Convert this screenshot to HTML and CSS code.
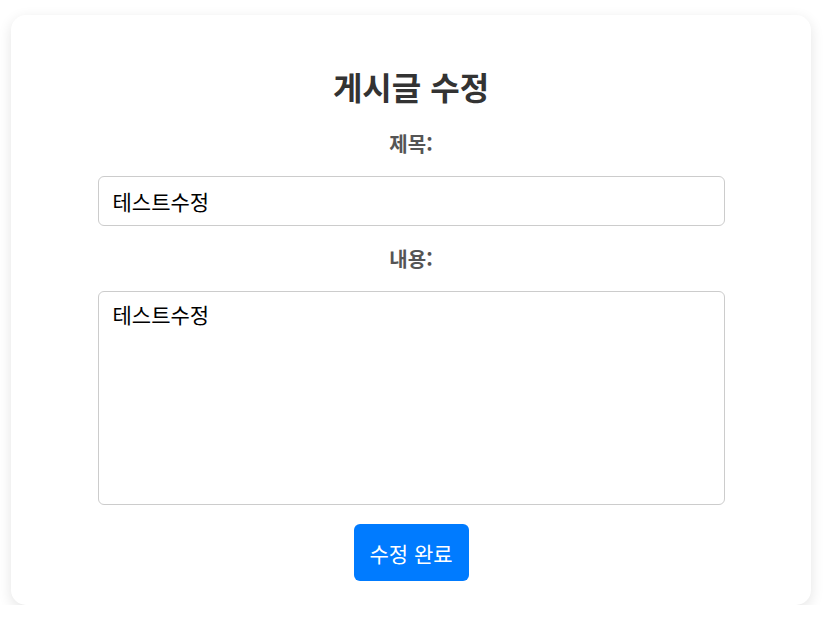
FILE: index.html
```html
<!DOCTYPE html>
<html lang="ko">
<head>
<meta charset="utf-8">
<title>게시글 수정</title>
<link rel="stylesheet" href="styles.css">
</head>
<body>
<div class="card">
  <h2 class="title">게시글 수정</h2>
  <form class="form">
    <label class="label" for="t">제목:</label>
    <input class="input" id="t" type="text" value="테스트수정">
    <label class="label label-second" for="c">내용:</label>
    <textarea class="textarea" id="c">테스트수정</textarea>
    <button class="btn" type="button">수정 완료</button>
  </form>
</div>
</body>
</html>
```

FILE: styles.css
```css
html, body {
  margin: 0;
  padding: 0;
  background: #ffffff;
  font-family: "Noto Sans CJK KR", "Noto Sans", sans-serif;
}
body {
  padding: 15px 0 0 11px;
}
.card {
  box-sizing: border-box;
  width: 800px;
  height: 590px;
  background: #fff;
  border-radius: 15px;
  box-shadow: 0 4px 14px rgba(0, 0, 0, 0.11);
  padding: 52px 86px 0 86px;
}
.title {
  margin: 0;
  text-align: center;
  font-size: 32px;
  line-height: 38px;
  font-weight: 700;
  color: #333;
}
.form {
  display: flex;
  flex-direction: column;
  align-items: center;
}
.label {
  margin-top: 27px;
  font-size: 20px;
  line-height: 24px;
  font-weight: 700;
  color: #555;
}
.label-second {
  margin-top: 21px;
}
.input, .textarea {
  box-sizing: border-box;
  width: 627px;
  margin-top: 20px;
  border: 1px solid #ccc;
  border-radius: 6px;
  padding: 0 14px;
  font-family: "Noto Sans CJK KR", "Noto Sans", sans-serif;
  font-size: 21px;
  color: #000;
  background: #fff;
  outline: none;
}
.input {
  height: 50px;
}
.textarea {
  height: 214px;
  padding-top: 9px;
  resize: none;
  line-height: 26px;
}
.btn {
  margin-top: 19px;
  width: 115px;
  height: 57px;
  border: none;
  border-radius: 6px;
  background: #007bff;
  color: #fff;
  font-family: "Noto Sans CJK KR", "Noto Sans", sans-serif;
  font-size: 21px;
  padding: 0;
  cursor: pointer;
}
```
